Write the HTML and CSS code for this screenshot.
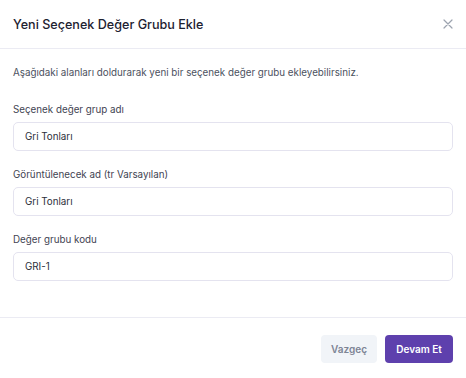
FILE: index.html
```html
<!DOCTYPE html>
<html lang="tr">
<head>
  <meta charset="UTF-8" />
  <meta name="viewport" content="width=device-width, initial-scale=1.0" />
  <title>Yeni Seçenek Değer Grubu Ekle</title>
  <link rel="stylesheet" href="styles.css">
</head>
<body>
  <div class="modal">
    <div class="modal-header">
      <h2>Yeni Seçenek Değer Grubu Ekle</h2>
      <button class="close" type="button" aria-label="Kapat">
        <svg width="10" height="10" viewBox="0 0 10 10">
          <path d="M1 1 L9 9 M9 1 L1 9" stroke="#9ca3af" stroke-width="1.2" stroke-linecap="round" fill="none" />
        </svg>
      </button>
    </div>

    <div class="modal-body">
      <p class="intro">Aşağıdaki alanları doldurarak yeni bir seçenek değer grubu ekleyebilirsiniz.</p>

      <div class="field">
        <label for="groupName">Seçenek değer grup adı</label>
        <input type="text" id="groupName" value="Gri Tonları" />
      </div>

      <div class="field">
        <label for="displayName">Görüntülenecek ad (tr Varsayılan)</label>
        <input type="text" id="displayName" value="Gri Tonları" />
      </div>

      <div class="field">
        <label for="groupCode">Değer grubu kodu</label>
        <input type="text" id="groupCode" value="GRI-1" />
      </div>
    </div>

    <div class="modal-footer">
      <button class="btn btn-light" type="button">Vazgeç</button>
      <button class="btn btn-primary" type="button">Devam Et</button>
    </div>
  </div>
</body>
</html>
```

FILE: styles.css
```css
body {
  font-family: Inter, "Noto Sans", sans-serif;
  margin: 0;
  background: white;
  color: #1f2937;
}

.modal {
  width: 466px;
  height: 378px;
  background: white;
}

.modal-header {
  height: 48px;
  padding: 0 13px;
  display: flex;
  align-items: center;
  justify-content: space-between;
  border-bottom: 1px solid #ebebf3;
}

h2 {
  margin: 0;
  font-size: 12.6px;
  font-weight: 500;
  color: #1d2130;
}

.close {
  border: none;
  background: none;
  padding: 0;
  width: 10px;
  height: 10px;
  display: flex;
  cursor: pointer;
}

.modal-body {
  padding: 17px 13px 36px;
}

.intro {
  margin: 0 0 23px;
  font-size: 9.8px;
  line-height: 14px;
  color: #4b5160;
}

.field {
  margin-bottom: 17px;
}

.field:last-child {
  margin-bottom: 0;
}

label {
  display: block;
  font-size: 9.8px;
  line-height: 14px;
  color: #3f4452;
  margin-bottom: 5px;
}

input {
  width: 100%;
  height: 29px;
  box-sizing: border-box;
  padding: 0 11px;
  border: 1px solid #e4e3ef;
  border-radius: 5px;
  font-family: inherit;
  font-size: 9.8px;
  color: #2b2f3a;
  outline: none;
}

.modal-footer {
  border-top: 1px solid #ebebf3;
  padding: 17px 13px;
  display: flex;
  justify-content: flex-end;
  gap: 8px;
}

.btn {
  height: 28px;
  border: none;
  border-radius: 4px;
  font-family: inherit;
  font-size: 10px;
  font-weight: 600;
  cursor: pointer;
}

.btn-light {
  width: 56px;
  background: #f1f4f8;
  color: #7e8495;
}

.btn-primary {
  width: 68px;
  background: #5e40ad;
  color: white;
}
```
